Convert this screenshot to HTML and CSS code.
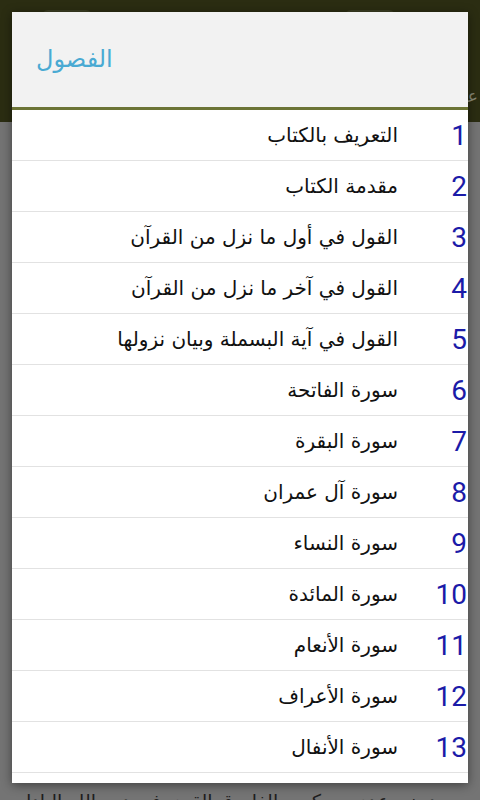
FILE: index.html
```html
<!DOCTYPE html>
<html lang="ar" dir="rtl">

<head>
    <meta charset="UTF-8">
    <meta name="viewport" content="width=device-width, initial-scale=1.0">
    <title>الفصول</title>
    <link rel="stylesheet" href="styles.css">
</head>

<body>
    <!-- page behind the dialog (dimmed) -->
    <div class="screen">
        <header class="app-bar">
            <div class="bar-buttons">
                <span class="bar-btn"></span>
                <span class="bar-btn"></span>
            </div>
            <p class="bar-sub">عن الكتاب وتعريف موجز بالمؤلف والطبعة ت</p>
        </header>
        <main class="page">
            <p class="page-text">بسيد بني عدي بن كعب الفاروق القوي في دين الله البادل نفسه وماله</p>
        </main>
    </div>

    <!-- chapters dialog -->
    <div class="dialog">
        <div class="dialog-head">
            <h1 class="dialog-title">الفصول</h1>
        </div>
        <ul class="chapters">
            <li class="chapter"><span class="num">1</span><span class="name">التعريف بالكتاب</span></li>
            <li class="chapter"><span class="num">2</span><span class="name">مقدمة الكتاب</span></li>
            <li class="chapter"><span class="num">3</span><span class="name">القول في أول ما نزل من القرآن</span></li>
            <li class="chapter"><span class="num">4</span><span class="name">القول في آخر ما نزل من القرآن</span></li>
            <li class="chapter"><span class="num">5</span><span class="name">القول في آية البسملة وبيان نزولها</span></li>
            <li class="chapter"><span class="num">6</span><span class="name">سورة الفاتحة</span></li>
            <li class="chapter"><span class="num">7</span><span class="name">سورة البقرة</span></li>
            <li class="chapter"><span class="num">8</span><span class="name">سورة آل عمران</span></li>
            <li class="chapter"><span class="num">9</span><span class="name">سورة النساء</span></li>
            <li class="chapter"><span class="num">10</span><span class="name">سورة المائدة</span></li>
            <li class="chapter"><span class="num">11</span><span class="name">سورة الأنعام</span></li>
            <li class="chapter"><span class="num">12</span><span class="name">سورة الأعراف</span></li>
            <li class="chapter"><span class="num">13</span><span class="name">سورة الأنفال</span></li>
        </ul>
    </div>
</body>

</html>
```

FILE: styles.css
```css
/* Reset */
* {
    margin: 0;
    padding: 0;
    box-sizing: border-box;
}

body {
    width: 480px;
    height: 800px;
    overflow: hidden;
    font-family: "DejaVu Sans", sans-serif;
    background-color: #747474;
    position: relative;
}

/* Dimmed page underneath */
.screen {
    height: 800px;
    display: flex;
    flex-direction: column;
    overflow: hidden;
}

.app-bar {
    height: 122px;
    background: #2b2d12;
    display: flex;
    flex-direction: column;
    justify-content: space-between;
    padding: 10px 0 16px;
}

.bar-buttons {
    display: flex;
    justify-content: space-between;
    padding: 0 85px 0 42px;
}

.bar-btn {
    width: 50px;
    height: 30px;
    border-radius: 6px;
    background: #3b3d22;
}

.bar-sub {
    color: #8a8b78;
    font-size: 17px;
    white-space: nowrap;
    overflow: hidden;
    text-align: right;
    padding-right: 2px;
}

.page {
    flex: 1;
    display: flex;
    flex-direction: column;
    justify-content: flex-end;
    background: #747474;
    padding: 0 14px;
}

.page-text {
    color: #1e1e1e;
    font-size: 19px;
    white-space: nowrap;
    overflow: hidden;
    text-align: right;
    margin-bottom: -12px;
}

/* Dialog */
.dialog {
    position: absolute;
    top: 12px;
    left: 12px;
    width: 456px;
    height: 771px;
    background: #ffffff;
    box-shadow: 0 2px 10px rgba(0, 0, 0, 0.45);
    display: flex;
    flex-direction: column;
}

.dialog-head {
    height: 98px;
    background: #f2f2f2;
    border-bottom: 3px solid #6c7436;
    display: flex;
    align-items: center;
    direction: ltr;
    padding: 0 24px 2px;
}

.dialog-title {
    font-weight: normal;
    font-size: 24px;
    color: #4aaad3;
    direction: rtl;
}

.chapters {
    list-style: none;
}

.chapter {
    height: 51px;
    border-bottom: 1px solid #e2e2e2;
    display: flex;
    align-items: center;
}

.chapter .num {
    width: 70px;
    flex: none;
    font-family: Roboto, sans-serif;
    font-size: 28px;
    color: #1b1ba8;
    text-align: right;
    padding-right: 1px;
    direction: ltr;
}

.chapter .name {
    font-size: 20px;
    color: #111111;
}
```
